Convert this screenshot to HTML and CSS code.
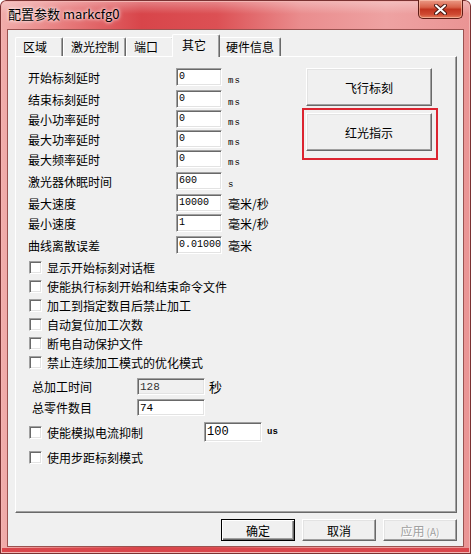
FILE: index.html
```html
<!DOCTYPE html>
<html lang="zh-CN">
<head>
<meta charset="UTF-8">
<title>配置参数 markcfg0</title>
<link rel="stylesheet" href="styles.css">
</head>
<body>
<div class="window">
  <div class="titlebar">
    <span class="title">配置参数 markcfg0</span>
    <div class="close">
      <svg width="13" height="11" viewBox="0 0 13 11">
        <path d="M2 1.5 L11 9.5 M11 1.5 L2 9.5" stroke="#4a1a14" stroke-width="4" stroke-linecap="round"/>
        <path d="M2 1.5 L11 9.5 M11 1.5 L2 9.5" stroke="#fff" stroke-width="2" stroke-linecap="round"/>
      </svg>
    </div>
  </div>

  <div class="client">
    <div class="tabs">
      <div class="tab">区域</div>
      <div class="tab">激光控制</div>
      <div class="tab">端口</div>
      <div class="tab active">其它</div>
      <div class="tab">硬件信息</div>
    </div>

    <div class="panel">
      <div class="left-col">
        <div class="field"><label>开始标刻延时</label><div class="edit">0</div><span class="unit low">ms</span></div>
        <div class="field sp"><label>结束标刻延时</label><div class="edit">0</div><span class="unit low">ms</span></div>
        <div class="field"><label>最小功率延时</label><div class="edit">0</div><span class="unit low">ms</span></div>
        <div class="field"><label>最大功率延时</label><div class="edit">0</div><span class="unit low">ms</span></div>
        <div class="field"><label>最大频率延时</label><div class="edit">0</div><span class="unit low">ms</span></div>
        <div class="field sp"><label>激光器休眠时间</label><div class="edit">600</div><span class="unit low">s</span></div>
        <div class="field sp"><label>最大速度</label><div class="edit">10000</div><span class="unit">毫米/秒</span></div>
        <div class="field"><label>最小速度</label><div class="edit">1</div><span class="unit">毫米/秒</span></div>
        <div class="field sp"><label>曲线离散误差</label><div class="edit">0.01000</div><span class="unit">毫米</span></div>

        <div class="checks">
          <div class="check"><span class="box"></span>显示开始标刻对话框</div>
          <div class="check"><span class="box"></span>使能执行标刻开始和结束命令文件</div>
          <div class="check"><span class="box"></span>加工到指定数目后禁止加工</div>
          <div class="check"><span class="box"></span>自动复位加工次数</div>
          <div class="check"><span class="box"></span>断电自动保护文件</div>
          <div class="check"><span class="box"></span>禁止连续加工模式的优化模式</div>
        </div>

        <div class="total first"><label>总加工时间</label><div class="edit wide disabled">128</div><span class="unit sec">秒</span></div>
        <div class="total"><label>总零件数目</label><div class="edit wide">74</div></div>

        <div class="check current"><span class="box"></span><span class="check-text">使能模拟电流抑制</span><div class="edit mid">100</div><span class="unit us">us</span></div>
        <div class="check step"><span class="box"></span>使用步距标刻模式</div>
      </div>

      <div class="right-col">
        <button class="btn big">飞行标刻</button>
        <div class="mark">
          <button class="btn big">红光指示</button>
        </div>
      </div>
    </div>

    <div class="footer">
      <button class="btn default">确定</button>
      <button class="btn">取消</button>
      <button class="btn" disabled>应用<span class="acc">(A)</span></button>
    </div>
  </div>
</div>
</body>
</html>
```

FILE: styles.css
```css
body {
    margin: 0;
    font-family: "Noto Sans CJK SC", sans-serif;
    font-size: 12px;
    color: #000;
}
.window {
    width: 471px;
    height: 554px;
    box-sizing: border-box;
    display: flex;
    flex-direction: column;
    border-radius: 6px 6px 0 0;
    background:
        linear-gradient(180deg, rgba(255,255,255,0.35) 0, rgba(255,255,255,0) 14px),
        linear-gradient(90deg, #f1aeac 0%, #e77a7b 14%, #d8454a 30%, #dc5054 46%, #ea8d8e 64%, #eea2a2 82%, #ea9494 100%);
    box-shadow: inset 0 0 0 1px #7a3232, inset 0 0 0 2px #f3b4b2, inset 0 -4px 0 2px #d9464b;
}
.titlebar {
    height: 30px;
    display: flex;
    align-items: flex-start;
    padding-left: 8px;
}
.title {
    margin-top: 6px;
    font-size: 13px;
    line-height: 16px;
    text-shadow: 0 0 5px #fff, 0 0 3px #fff;
}
.close {
    margin-left: auto;
    margin-right: 8px;
    width: 45px;
    height: 19px;
    box-sizing: border-box;
    border: 1px solid #5e1d16;
    border-top: none;
    border-radius: 0 0 5px 5px;
    background: linear-gradient(180deg, #eb9a86 0%, #d8624a 40%, #c1341f 52%, #cf4a32 80%, #e4805f 100%);
    box-shadow: inset 0 0 0 1px rgba(255, 210, 190, 0.55);
    display: flex;
    align-items: center;
    justify-content: center;
}
.close svg {
    display: block;
}
.client {
    flex: 1;
    margin: 0 8px 8px;
    padding: 4px 6px 5px 7px;
    background: #f0f0f0;
    display: flex;
    flex-direction: column;
    box-shadow: 0 0 0 1px #9a5250;
}

/* tabs */
.tabs {
    display: flex;
    align-items: flex-end;
    height: 22px;
    position: relative;
    z-index: 1;
}
.tab {
    height: 19px;
    min-width: 48px;
    box-sizing: border-box;
    padding: 0 6px 0 7px;
    line-height: 18px;
    background: #f0f0f0;
    border-top: 1px solid #fff;
    border-left: 1px solid #fff;
    border-right: 1px solid #696969;
    border-radius: 2px 2px 0 0;
    box-shadow: inset -1px 0 #a0a0a0;
}
.tab.active {
    height: 23px;
    margin: 0 -2px -1px -2px;
    padding: 1px 8px 0 9px;
    position: relative;
    z-index: 2;
}
.panel {
    flex: 1;
    display: flex;
    border-top: 1px solid #fff;
    border-left: 1px solid #fff;
    border-right: 1px solid #696969;
    border-bottom: 1px solid #696969;
    box-shadow: inset -1px -1px #a0a0a0;
}
.left-col {
    flex: 1;
    padding: 11px 0 0 12px;
}
.right-col {
    width: 136px;
    padding-top: 11px;
    margin-right: 18px;
}

/* fields */
.field {
    display: flex;
    align-items: center;
    height: 18px;
    margin-top: 2px;
}
.field:first-child {
    margin-top: 0;
}
.field.sp {
    margin-top: 4px;
}
.field label {
    width: 148px;
}
.edit {
    width: 46px;
    height: 18px;
    box-sizing: border-box;
    padding: 1px 0 0 2px;
    background: #fff;
    font-family: "Liberation Mono", monospace;
    font-size: 10px;
    line-height: 14px;
    border: 1px solid;
    border-color: #a0a0a0 #fff #fff #a0a0a0;
    box-shadow: inset 1px 1px #696969, inset -1px -1px #e3e3e3;
}
.unit {
    margin-left: 6px;
}
.unit.low {
    align-self: flex-end;
    font-family: "Liberation Mono", monospace;
    font-size: 9px;
    letter-spacing: 1px;
    line-height: 12px;
    margin-bottom: -1px;
}

/* checkboxes */
.checks {
    margin-top: 4px;
}
.check {
    display: flex;
    align-items: center;
    height: 19px;
    margin-left: 1px;
}
.box {
    width: 13px;
    height: 13px;
    box-sizing: border-box;
    margin-right: 5px;
    background: #fff;
    border: 1px solid;
    border-color: #a0a0a0 #fff #fff #a0a0a0;
    box-shadow: inset 1px 1px #696969, inset -1px -1px #e3e3e3;
}

/* totals */
.total {
    display: flex;
    align-items: center;
    height: 17px;
    margin-top: 4px;
    padding-left: 4px;
}
.total.first {
    margin-top: 6px;
}
.total label {
    width: 105px;
}
.edit.wide {
    width: 68px;
    height: 17px;
    font-size: 11px;
}
.edit.disabled {
    background: #f0f0f0;
    color: #333;
}
.unit.sec {
    margin-left: 4px;
    font-size: 13px;
}
.check.current {
    height: 20px;
    margin-top: 6px;
}
.check-text {
    width: 157px;
}
.edit.mid {
    width: 58px;
    height: 20px;
    font-size: 12px;
    line-height: 16px;
}
.unit.us {
    margin-left: 5px;
    font-family: "Liberation Mono", monospace;
    font-weight: bold;
    font-size: 9px;
}
.check.step {
    margin-top: 6px;
}

/* buttons */
.btn {
    font-family: "Noto Sans CJK SC", sans-serif;
    font-size: 12px;
    color: #000;
    background: #f0f0f0;
    width: 74px;
    height: 22px;
    padding: 0;
    box-sizing: border-box;
    border: 1px solid;
    border-color: #fff #696969 #696969 #fff;
    box-shadow: inset -1px -1px #a0a0a0, inset 1px 1px #e3e3e3;
}
.btn.big {
    display: block;
    width: 126px;
    height: 38px;
    margin-left: 4px;
}
.mark {
    margin-top: 2px;
    border: 2px solid #dc2430;
    padding: 3px 4px 7px 2px;
}
.mark .btn.big {
    margin-left: 0;
}
.btn.default {
    border-color: #000;
    box-shadow: inset 1px 1px #fff, inset -1px -1px #696969, inset -2px -2px #a0a0a0;
}
.btn:disabled {
    color: #a0a0a0;
    text-shadow: 1px 1px #fff;
}
.acc {
    font-size: 10px;
    margin-left: 2px;
}
.footer {
    display: flex;
    justify-content: flex-end;
    gap: 7px;
    margin-top: 6px;
}
```
